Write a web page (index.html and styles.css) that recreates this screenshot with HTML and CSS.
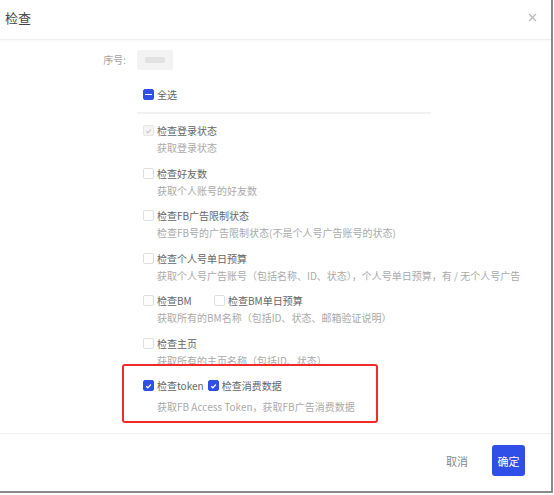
FILE: index.html
```html
<!DOCTYPE html>
<html lang="zh">
<head>
<meta charset="utf-8">
<link rel="stylesheet" href="styles.css">
</head>
<body>
<div class="dialog">
  <div class="header">
    <span class="title">检查</span>
    <span class="close">
      <svg width="9" height="9" viewBox="0 0 9 9"><path d="M1 1L8 8M8 1L1 8" stroke="#bbb" stroke-width="1.2" fill="none"/></svg>
    </span>
  </div>
  <div class="body">
    <div class="form">
      <div class="label">序号:</div>
      <div class="field"><div class="blur"><span></span></div></div>

      <div class="label"></div>
      <div class="field">
        <div class="all">
          <span class="cb indet"><i></i></span><span class="txt">全选</span>
        </div>
        <div class="divider"></div>

        <div class="item">
          <div class="line"><span class="cb disabled"><svg viewBox="0 0 10 10"><path d="M2.5 5.2L4.3 7L7.6 3.3" stroke="#c8c8c8" stroke-width="1.3" fill="none"/></svg></span><span class="txt">检查登录状态</span></div>
          <div class="desc">获取登录状态</div>
        </div>
        <div class="item">
          <div class="line"><span class="cb"></span><span class="txt">检查好友数</span></div>
          <div class="desc">获取个人账号的好友数</div>
        </div>
        <div class="item">
          <div class="line"><span class="cb"></span><span class="txt">检查FB广告限制状态</span></div>
          <div class="desc">检查FB号的广告限制状态(不是个人号广告账号的状态)</div>
        </div>
        <div class="item">
          <div class="line"><span class="cb"></span><span class="txt">检查个人号单日预算</span></div>
          <div class="desc">获取个人号广告账号（包括名称、ID、状态），个人号单日预算，有 / 无个人号广告</div>
        </div>
        <div class="item">
          <div class="line"><span class="cb"></span><span class="txt bm">检查BM</span><span class="cb"></span><span class="txt">检查BM单日预算</span></div>
          <div class="desc">获取所有的BM名称（包括ID、状态、邮箱验证说明）</div>
        </div>
        <div class="item">
          <div class="line"><span class="cb"></span><span class="txt">检查主页</span></div>
          <div class="desc">获取所有的主页名称（包括ID、状态）</div>
        </div>
        <div class="item token">
          <div class="line"><span class="cb checked"><svg viewBox="0 0 10 10"><path d="M2.5 5.2L4.3 7L7.6 3.3" stroke="#fff" stroke-width="1.4" fill="none"/></svg></span><span class="txt tk">检查token</span><span class="cb checked"><svg viewBox="0 0 10 10"><path d="M2.5 5.2L4.3 7L7.6 3.3" stroke="#fff" stroke-width="1.4" fill="none"/></svg></span><span class="txt">检查消费数据</span></div>
          <div class="desc">获取FB Access Token，获取FB广告消费数据</div>
          <div class="mark"></div>
        </div>
      </div>
    </div>
  </div>
  <div class="footer">
    <span class="cancel">取消</span>
    <span class="ok">确定</span>
  </div>
</div>
</body>
</html>
```
FILE: styles.css
```css
* { box-sizing: border-box; }
html, body { margin: 0; padding: 0; background: #fff; }
body {
  font-family: "Noto Sans CJK SC", "Noto Sans", sans-serif;
  width: 554px;
  height: 495px;
  overflow: hidden;
}
.dialog {
  width: 553px;
  height: 493px;
  border-right: 2px solid #8a8a8a;
  border-bottom: 2px solid #8a8a8a;
  display: flex;
  flex-direction: column;
  background: #fff;
}
.header {
  height: 40px;
  flex: none;
  display: flex;
  align-items: center;
  justify-content: space-between;
  padding: 0 14px 4px 5px;
  border-bottom: 1px solid #f0f0f0;
  box-shadow: 0 1px 2px rgba(0,0,0,0.03);
}
.title { font-size: 13px; color: #444; line-height: 18px; }
.close { display: flex; width: 9px; height: 9px; }
.body { flex: 1; padding-top: 10px; position: relative; }
.form {
  display: grid;
  grid-template-columns: 137px 1fr;
  row-gap: 16px;
}
.label {
  text-align: right;
  padding-right: 11px;
  font-size: 10px;
  color: #a5a5a5;
  line-height: 20px;
}
.blur {
  width: 36px;
  height: 20px;
  background: #f3f3f3;
  border-radius: 2px;
  display: flex;
  align-items: center;
  justify-content: center;
  filter: blur(0.6px);
}
.blur span { width: 20px; height: 6px; background: #e2e2e2; border-radius: 2px; }
.field { font-size: 10px; }
.all { display: flex; align-items: center; height: 17px; padding-left: 6px; }
.divider { height: 2px; background: #f2f2f2; width: 294px; margin: 9px 0 8px; }
.item { padding-left: 6px; margin-bottom: 8.5px; position: relative; }
.line { display: flex; align-items: center; height: 17px; }
.cb {
  width: 11px;
  height: 11px;
  border: 1px solid #dedede;
  border-radius: 2px;
  background: #fff;
  flex: none;
  display: flex;
  align-items: center;
  justify-content: center;
}
.cb svg { width: 10px; height: 10px; }
.cb.indet { background: #2f4fe8; border-color: #2f4fe8; }
.cb.indet i { width: 7px; height: 1.5px; background: #fff; display: block; }
.cb.disabled { background: #f5f5f5; border-color: #e6e6e6; }
.cb.checked { background: #2f4fe8; border-color: #2f4fe8; }
.txt { color: #666; margin-left: 3px; line-height: 17px; white-space: nowrap; }
.txt.bm { width: 57px; }
.txt.tk { margin-right: 4px; }
.desc { color: #aaa; line-height: 17px; white-space: nowrap; padding-left: 14px; }
.token .desc { margin-top: 4px; }
.mark {
  position: absolute;
  left: -15px;
  top: -13px;
  width: 256px;
  height: 59px;
  border: 2px solid #f12a2a;
  border-radius: 3px;
}
.footer {
  height: 58px;
  flex: none;
  border-top: 1px solid #efefef;
  display: flex;
  align-items: center;
  justify-content: flex-end;
  padding: 0 26px 4px 0;
  margin-bottom: 0;
}
.cancel { font-size: 11px; color: #888; margin-right: 24px; }
.ok {
  width: 33px;
  height: 31px;
  background: #2f4fe8;
  color: #fff;
  font-size: 11px;
  border-radius: 3px;
  display: flex;
  align-items: center;
  justify-content: center;
}
```
